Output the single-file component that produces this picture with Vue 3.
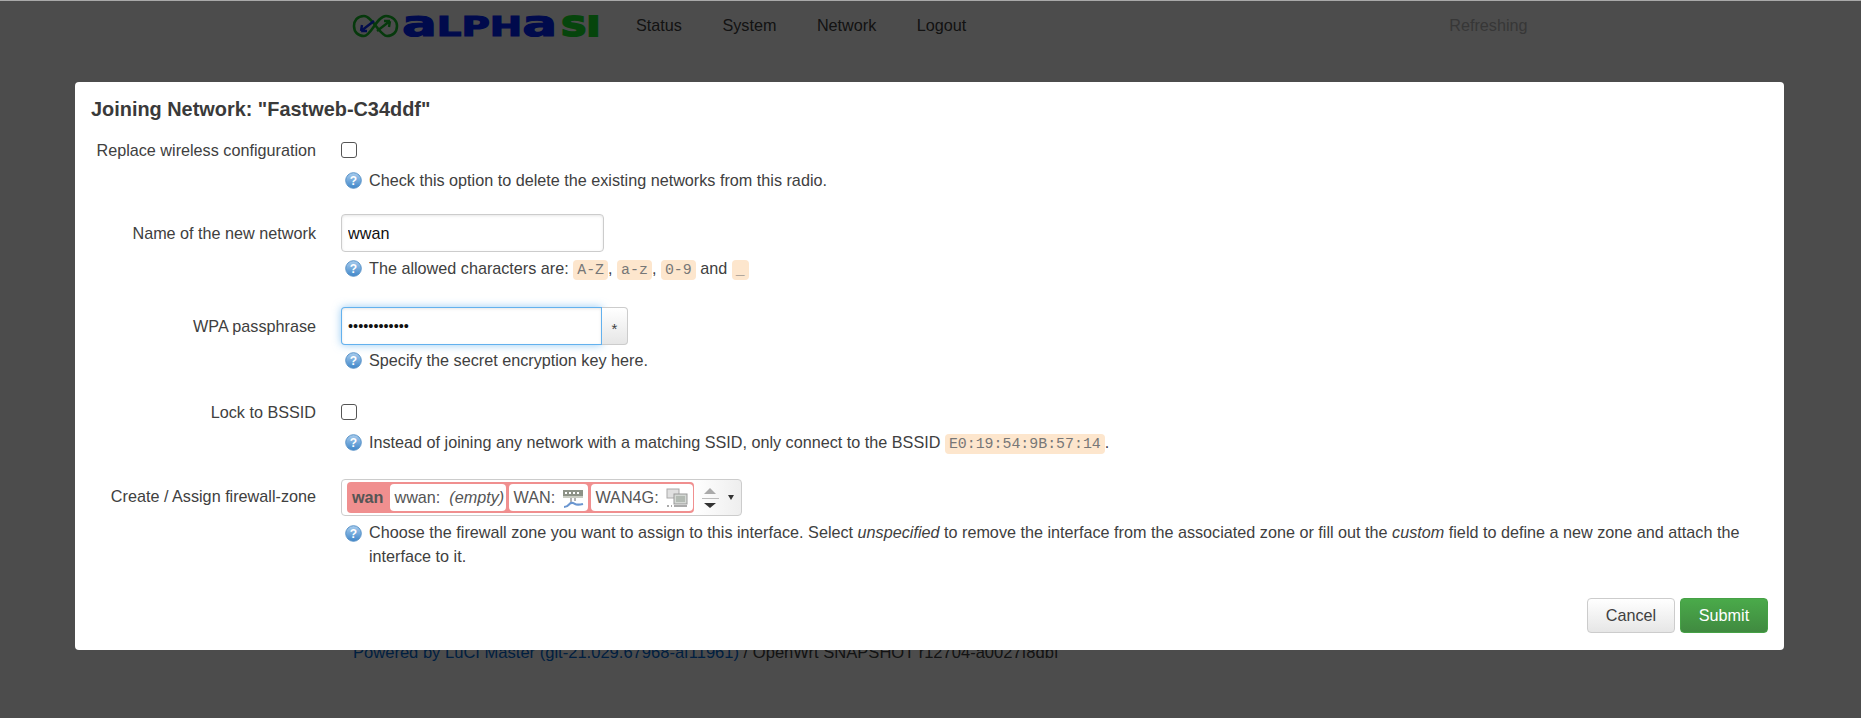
<template>
  <div class="page">
    <header class="topbar">
      <svg class="logo" width="250" height="44" viewBox="0 -9 250 44">
        <!-- loop with the two arrows -->
        <path d="M12 3 C5 3 2 8 2 13 C2 19 6 23 12 23 C19 23 25 3 34 3 C41 3 45 8 45 13 C45 19 41 23 35 23 C28 23 20 3 12 3 Z" fill="none" stroke="#16c02a" stroke-width="2.6" />
        <path d="M9 18 L22 8 M9 18 l1 -6 M9 18 l6 0" fill="none" stroke="#0a2cff" stroke-width="2.4" />
        <path d="M25 18 L38 8 M38 8 l-6 0 M38 8 l-1 6" fill="none" stroke="#16c02a" stroke-width="2.4" />
        <text class="logo-word" x="50" y="23" textLength="155" lengthAdjust="spacingAndGlyphs" fill="#0022ff" stroke="#0022ff">
          <tspan font-size="36">a</tspan>LPH<tspan font-size="36">a</tspan>
        </text>
        <text class="logo-word logo-si" x="209" y="23" textLength="39" lengthAdjust="spacingAndGlyphs" fill="#14e628" stroke="#14e628">SI</text>
      </svg>
      <nav class="menu">
        <a v-for="item in menu" :key="item">{{ item }}</a>
      </nav>
      <span class="refreshing">Refreshing</span>
    </header>

    <footer class="foot">
      <a>Powered by LuCI Master (git-21.029.67968-af11961)</a> / OpenWrt SNAPSHOT r12704-a0027f8dbf
    </footer>
  </div>

  <div class="overlay">
    <div class="modal">
      <h4 class="modal-title">Joining Network: "Fastweb-C34ddf"</h4>

      <div class="row row-1">
        <label class="row-label">Replace wireless configuration</label>
        <div class="row-field">
          <div class="ctl ctl-check"><span class="check"></span></div>
          <div class="help">
            <HelpIcon />
            <span>Check this option to delete the existing networks from this radio.</span>
          </div>
        </div>
      </div>

      <div class="row row-2">
        <label class="row-label">Name of the new network</label>
        <div class="row-field">
          <div class="ctl"><input class="text-input" type="text" value="wwan" /></div>
          <div class="help help-input">
            <HelpIcon />
            <span>The allowed characters are: <code>A-Z</code>, <code>a-z</code>, <code>0-9</code> and <code>_</code></span>
          </div>
        </div>
      </div>

      <div class="row row-3">
        <label class="row-label">WPA passphrase</label>
        <div class="row-field">
          <div class="ctl">
            <input class="text-input focused" type="password" value="abcdefghijkl" />
            <button class="reveal" type="button">*</button>
          </div>
          <div class="help help-pass">
            <HelpIcon />
            <span>Specify the secret encryption key here.</span>
          </div>
        </div>
      </div>

      <div class="row row-4">
        <label class="row-label">Lock to BSSID</label>
        <div class="row-field">
          <div class="ctl ctl-check"><span class="check"></span></div>
          <div class="help">
            <HelpIcon />
            <span>Instead of joining any network with a matching SSID, only connect to the BSSID <code>E0:19:54:9B:57:14</code>.</span>
          </div>
        </div>
      </div>

      <div class="row row-5">
        <label class="row-label zone-label">Create / Assign firewall-zone</label>
        <div class="row-field">
          <div class="zone">
            <div class="zone-pink">
              <strong class="zone-name">wan</strong>
              <span class="badge badge-wwan">wwan:&nbsp; <em>(empty)</em></span>
              <span class="badge badge-wan">
                WAN:
                <svg width="22" height="22" viewBox="0 0 22 22">
                  <rect x="1" y="3" width="20" height="7" fill="#8d9287" />
                  <path d="M3 5h2v2H3zM7 5h2v2H7zM11 5h2v2h-2zM15 5h2v2h-2z" fill="#fff" />
                  <rect x="1" y="9" width="20" height="2" fill="#c9ccc2" />
                  <path d="M9 11v5M13 11v3" stroke="#666" stroke-width="1" fill="none" />
                  <path d="M2 20 C8 20 6 15 11 16 C14 17 13 19 21 17" stroke="#6a96d0" stroke-width="2.2" fill="none" />
                </svg>
              </span>
              <span class="badge badge-wan4g">
                WAN4G:
                <svg width="22" height="22" viewBox="0 0 22 22">
                  <rect x="1" y="2" width="12" height="9" fill="#e0e0e0" stroke="#aaa" />
                  <rect x="8" y="7" width="13" height="10" fill="#d4d8d4" stroke="#999" />
                  <rect x="10" y="9" width="9" height="6" fill="#b3bab3" />
                  <path d="M1 19h2M5 19h1M8 19h13" stroke="#aaa" stroke-width="2" fill="none" />
                </svg>
              </span>
            </div>
            <div class="zone-spin">
              <span class="tri-up"></span>
              <span class="spin-line"></span>
              <span class="tri-down"></span>
            </div>
            <span class="zone-open"></span>
          </div>
          <div class="help help-zone">
            <HelpIcon />
            <span>Choose the firewall zone you want to assign to this interface. Select <em>unspecified</em> to remove the interface from the associated zone or fill out the <em>custom</em> field to define a new zone and attach the interface to it.</span>
          </div>
        </div>
      </div>

      <div class="actions">
        <button class="btn" type="button">Cancel</button>
        <button class="btn btn-save" type="button">Submit</button>
      </div>
    </div>
  </div>
</template>

<script setup>
import { h } from 'vue'

const menu = ['Status', 'System', 'Network', 'Logout']

// the little blue help bubble in front of every description
const HelpIcon = () =>
  h('svg', { class: 'help-icon', width: 17, height: 17, viewBox: '0 0 17 17' }, [
    h('defs', [
      h('linearGradient', { id: 'helpfill', x1: 0, y1: 0, x2: 0, y2: 1 }, [
        h('stop', { offset: '0', 'stop-color': '#a9cdee' }),
        h('stop', { offset: '1', 'stop-color': '#3f86c9' })
      ])
    ]),
    h('circle', { cx: 8.5, cy: 8.5, r: 7.8, fill: 'url(#helpfill)', stroke: '#5b94c8', 'stroke-width': 1 }),
    h('text', {
      x: 8.5,
      y: 13,
      'text-anchor': 'middle',
      'font-size': 12,
      'font-weight': 700,
      'font-family': '"Liberation Sans", sans-serif',
      fill: '#fff'
    }, '?')
  ])
</script>

<style>
html, body {
  margin: 0;
  background: #fff;
  overflow: hidden;
}
</style>

<style scoped>
.page {
  height: 718px;
  font-family: "Liberation Sans", Arial, sans-serif;
  font-size: 16.2px;
  color: #404040;
}

.topbar {
  display: flex;
  align-items: center;
  height: 50px;
  padding-left: 352px;
}

.logo {
  display: block;
  margin-top: 1px;
}

.logo-word {
  font-family: "DejaVu Sans", sans-serif;
  font-size: 27px;
  font-weight: 700;
  stroke-width: 1.2;
}

.logo-si {
  stroke-width: 2;
}

.menu {
  display: flex;
  gap: 40.5px;
  margin-left: 34px;
}

.refreshing {
  margin-left: 483px;
  color: #b8b8b8;
}

.foot {
  margin-top: 593px;
  padding-left: 353px;
  font-size: 16.56px;
  line-height: 20px;
}

.foot a {
  color: #0069d6;
}

.overlay {
  position: fixed;
  inset: 0;
  background: rgba(0, 0, 0, 0.7);
  border-top: 1px solid #a9a9a9;
  padding-top: 81px;
  font-family: "Liberation Sans", Arial, sans-serif;
  font-size: 16.2px;
  color: #404040;
}

.modal {
  box-sizing: border-box;
  width: 1709px;
  height: 568px;
  margin-left: 75px;
  padding: 16px 16px 16px;
  background: #fff;
  border-radius: 4px;
}

.modal-title {
  margin: 0;
  font-size: 19.9px;
  line-height: 22px;
  font-weight: 700;
  color: #3a3a3a;
}

.row {
  display: flex;
}

.row-1 { margin-top: 14px; }
.row-2 { margin-top: 22px; }
.row-3 { margin-top: 25px; }
.row-4 { margin-top: 24px; }
.row-5 { margin-top: 23px; }

.row-label {
  flex: none;
  width: 225px;
  margin-right: 25px;
  text-align: right;
  line-height: 32px;
}

.row-2 .row-label,
.row-3 .row-label {
  line-height: 38px;
}

.zone-label {
  line-height: 35px;
}

.row-field {
  flex: 1;
  min-width: 0;
}

.ctl {
  display: flex;
  height: 38px;
}

.ctl-check {
  height: 32px;
  align-items: center;
}

.check {
  box-sizing: border-box;
  width: 16px;
  height: 16px;
  border: 1px solid #555;
  border-radius: 3px;
  background: #fff;
}

.text-input {
  box-sizing: border-box;
  width: 263px;
  height: 38px;
  padding: 0 6px;
  border: 1px solid #ccc;
  border-radius: 4px;
  outline: none;
  font-family: "Liberation Sans", Arial, sans-serif;
  font-size: 16.2px;
  color: #111;
  box-shadow: inset 0 1px 3px rgba(0, 0, 0, 0.1);
}

.focused {
  width: 261px;
  font-size: 14.5px;
  border-color: rgba(82, 168, 236, 0.9);
  border-radius: 4px 0 0 4px;
  box-shadow: inset 0 1px 3px rgba(0, 0, 0, 0.1), 0 0 8px rgba(82, 168, 236, 0.6);
}

.reveal {
  box-sizing: border-box;
  width: 26px;
  height: 38px;
  padding: 4px 0 0;
  border: 1px solid #ccc;
  border-left: 0;
  border-radius: 0 4px 4px 0;
  background: linear-gradient(#fff, #e6e6e6);
  font-family: "Liberation Sans", Arial, sans-serif;
  font-size: 15px;
  color: #404040;
}

.help {
  display: flex;
  align-items: flex-start;
  gap: 7px;
  margin-top: 2px;
  padding-left: 4px;
  line-height: 24px;
}

.help-input {
  margin-top: 4px;
}

.help-pass {
  margin-top: 3px;
}

.help-zone {
  margin-top: 5px;
  padding-right: 20px;
  line-height: 23.5px;
}

.help-icon {
  flex: none;
  margin-top: 4px;
}

code {
  padding: 2px 4px;
  border-radius: 4px;
  background: #fde6cd;
  font-family: "Liberation Mono", "Courier New", monospace;
  font-size: 14.9px;
  color: #777;
}

.zone {
  box-sizing: border-box;
  display: flex;
  align-items: stretch;
  width: 401px;
  height: 37px;
  padding: 2px 0 2px 5px;
  border: 1px solid #ccc;
  border-radius: 4px;
  background: linear-gradient(90deg, #fff 88%, #eee);
}

.zone-pink {
  display: flex;
  align-items: center;
  gap: 3px;
  width: 347px;
  padding: 0 1px 0 5px;
  box-sizing: border-box;
  border-radius: 4px;
  background: #f08f8f;
}

.zone-name {
  width: 36px;
  color: #555;
}

.badge {
  box-sizing: border-box;
  display: flex;
  align-items: center;
  height: 27px;
  padding: 0 4px;
  border-radius: 4px;
  background: #fff;
  color: #555;
}

.badge svg {
  margin-left: 7px;
}

.badge-wwan { width: 116px; white-space: pre; }
.badge-wan { width: 80px; }
.badge-wan4g { width: 103px; }

.zone-spin {
  display: flex;
  flex-direction: column;
  align-items: center;
  justify-content: center;
  gap: 4px;
  width: 26px;
  margin-left: 3px;
}

.tri-up {
  border: 6px solid transparent;
  border-top: 0;
  border-bottom: 6px solid #aaa;
}

.tri-down {
  border: 6px solid transparent;
  border-bottom: 0;
  border-top: 5px solid #333;
}

.spin-line {
  width: 17px;
  height: 1px;
  background: #bbb;
}

.zone-open {
  align-self: center;
  margin-left: 5px;
  border: 3px solid transparent;
  border-bottom: 0;
  border-top: 5px solid #333;
}

.actions {
  display: flex;
  justify-content: flex-end;
  gap: 5px;
  margin-top: 30px;
}

.btn {
  box-sizing: border-box;
  width: 88px;
  height: 35px;
  padding: 0;
  border: 1px solid #ccc;
  border-radius: 4px;
  background: linear-gradient(#fff, #e6e6e6);
  font-family: "Liberation Sans", Arial, sans-serif;
  font-size: 16.2px;
  color: #404040;
}

.btn-save {
  border-color: #45a145;
  background: linear-gradient(#4aaa4a, #408a40);
  color: #fff;
}
</style>
